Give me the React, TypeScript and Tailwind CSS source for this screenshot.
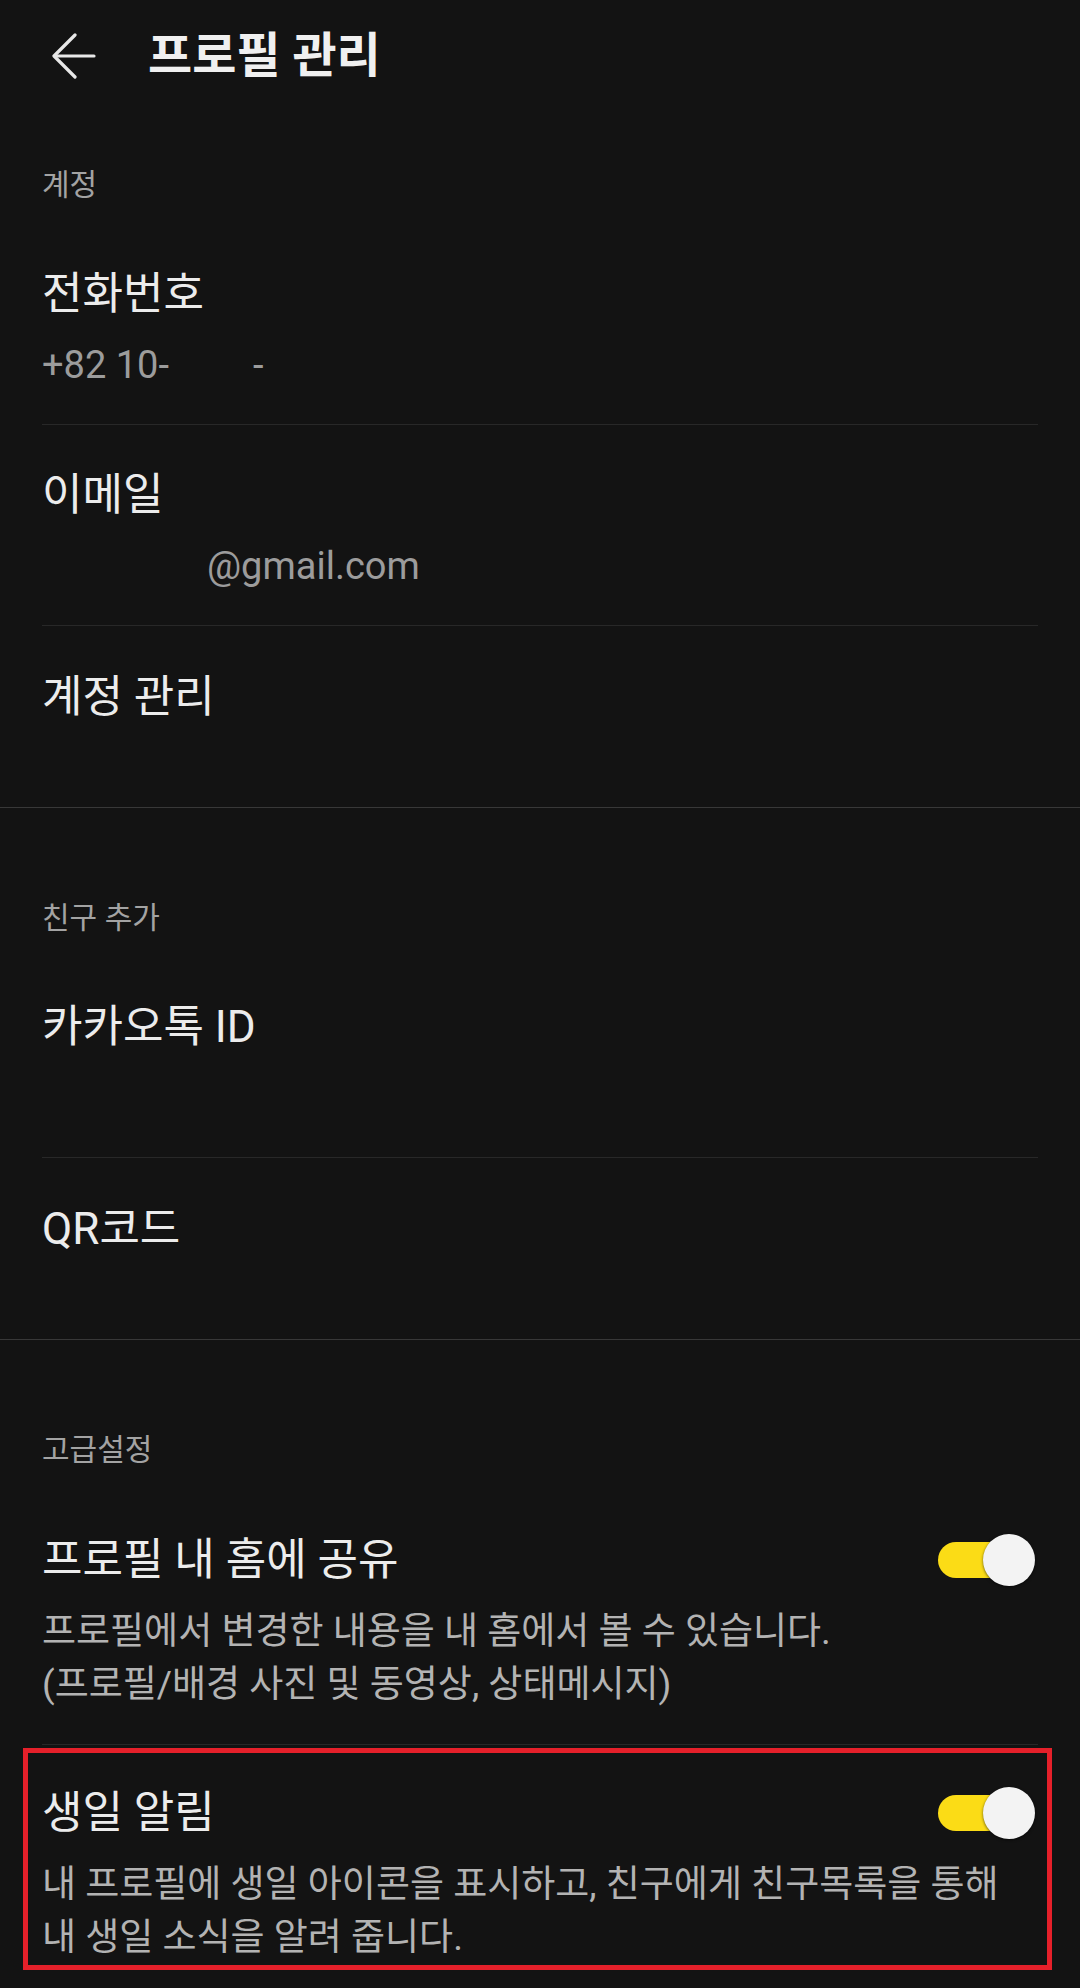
import type { ReactNode } from 'react'

const font = { fontFamily: 'Roboto, "Noto Sans CJK KR", sans-serif' }

function BackArrow() {
  return (
    <svg width="44" height="46" viewBox="0 0 44 46" fill="none" stroke="#e8e8e8" strokeWidth="3.2" strokeLinecap="round" strokeLinejoin="round">
      <path d="M42 23H3" />
      <path d="M23 2L2 23L23 44" />
    </svg>
  )
}

function Toggle() {
  return (
    <div className="relative w-[97px] h-[52px] shrink-0 mr-[3px]">
      <div className="absolute left-0 top-[8px] w-[80px] h-[36px] rounded-full bg-[#fbdc16]" />
      <div className="absolute right-0 top-0 w-[52px] h-[52px] rounded-full bg-[#f3f3f3] shadow-[0_1px_3px_rgba(0,0,0,0.6)]" />
    </div>
  )
}

function SectionLabel({ children }: { children: ReactNode }) {
  return <div className="px-[42px] h-[40px] leading-[40px] text-[30px] text-[#a3a3a3] mb-[19px]">{children}</div>
}

function Item({ title, value, single }: { title: string; value?: ReactNode; single?: boolean }) {
  return (
    <div className={single ? 'px-[42px] pt-[43px]' : 'px-[42px] pt-[42px] pb-[34px]'}>
      <div className="h-[56px] leading-[56px] text-[44px] text-[#ececec]">{title}</div>
      {!single && (
        <div className="mt-[18px] h-[50px] leading-[50px] text-[38px] text-[#9c9c9c] whitespace-pre">{value}</div>
      )}
    </div>
  )
}

function ToggleItem({ title, desc, pt, pb }: { title: string; desc: ReactNode; pt: string; pb: string }) {
  return (
    <div className={`px-[42px] ${pt} ${pb}`}>
      <div className="flex items-center justify-between h-[56px]">
        <div className="leading-[56px] text-[44px] text-[#ececec]">{title}</div>
        <Toggle />
      </div>
      <div className="mt-[17px] text-[37px] leading-[53px] text-[#b3b3b3]">{desc}</div>
    </div>
  )
}

const InsetDivider = () => <div className="mx-[42px] h-px bg-[#282828]" />
const FullDivider = () => <div className="h-px bg-[#383838]" />

export default function App() {
  return (
    <div className="w-[1080px] h-[1988px] overflow-hidden bg-[#131313]" style={font}>
      <header className="h-[106px] pt-[6px] flex items-center pl-[52px]">
        <BackArrow />
        <h1 className="ml-[52px] text-[48px] font-bold text-[#f0f0f0]">프로필 관리</h1>
      </header>

      <section className="pt-[59px] pb-[82px]">
        <SectionLabel>계정</SectionLabel>
        <Item
          title="전화번호"
          value={
            <>
              +82 10-<span className="ml-[84px]">-</span>
            </>
          }
        />
        <InsetDivider />
        <Item title="이메일" value={<span className="ml-[165px]">@gmail.com</span>} />
        <InsetDivider />
        <Item title="계정 관리" single />
      </section>
      <FullDivider />

      <section className="pt-[90px] pb-[82px]">
        <SectionLabel>친구 추가</SectionLabel>
        <Item title="카카오톡 ID" value="" />
        <InsetDivider />
        <Item title="QR코드" single />
      </section>
      <FullDivider />

      <section className="pt-[90px]">
        <SectionLabel>고급설정</SectionLabel>
        <ToggleItem
          title="프로필 내 홈에 공유"
          pt="pt-[43px]"
          pb="pb-[33px]"
          desc={
            <>
              프로필에서 변경한 내용을 내 홈에서 볼 수 있습니다.
              <br />
              (프로필/배경 사진 및 동영상, 상태메시지)
            </>
          }
        />
        <InsetDivider />
        <div className="relative">
          <ToggleItem
            title="생일 알림"
            pt="pt-[40px]"
            pb="pb-[24px]"
            desc={
              <>
                내 프로필에 생일 아이콘을 표시하고, 친구에게 친구목록을 통해
                <br />
                내 생일 소식을 알려 줍니다.
              </>
            }
          />
          <div className="absolute top-[3px] left-[23px] right-[28px] bottom-[18px] border-[5px] border-[#e5202a] pointer-events-none" />
        </div>
      </section>
    </div>
  )
}
